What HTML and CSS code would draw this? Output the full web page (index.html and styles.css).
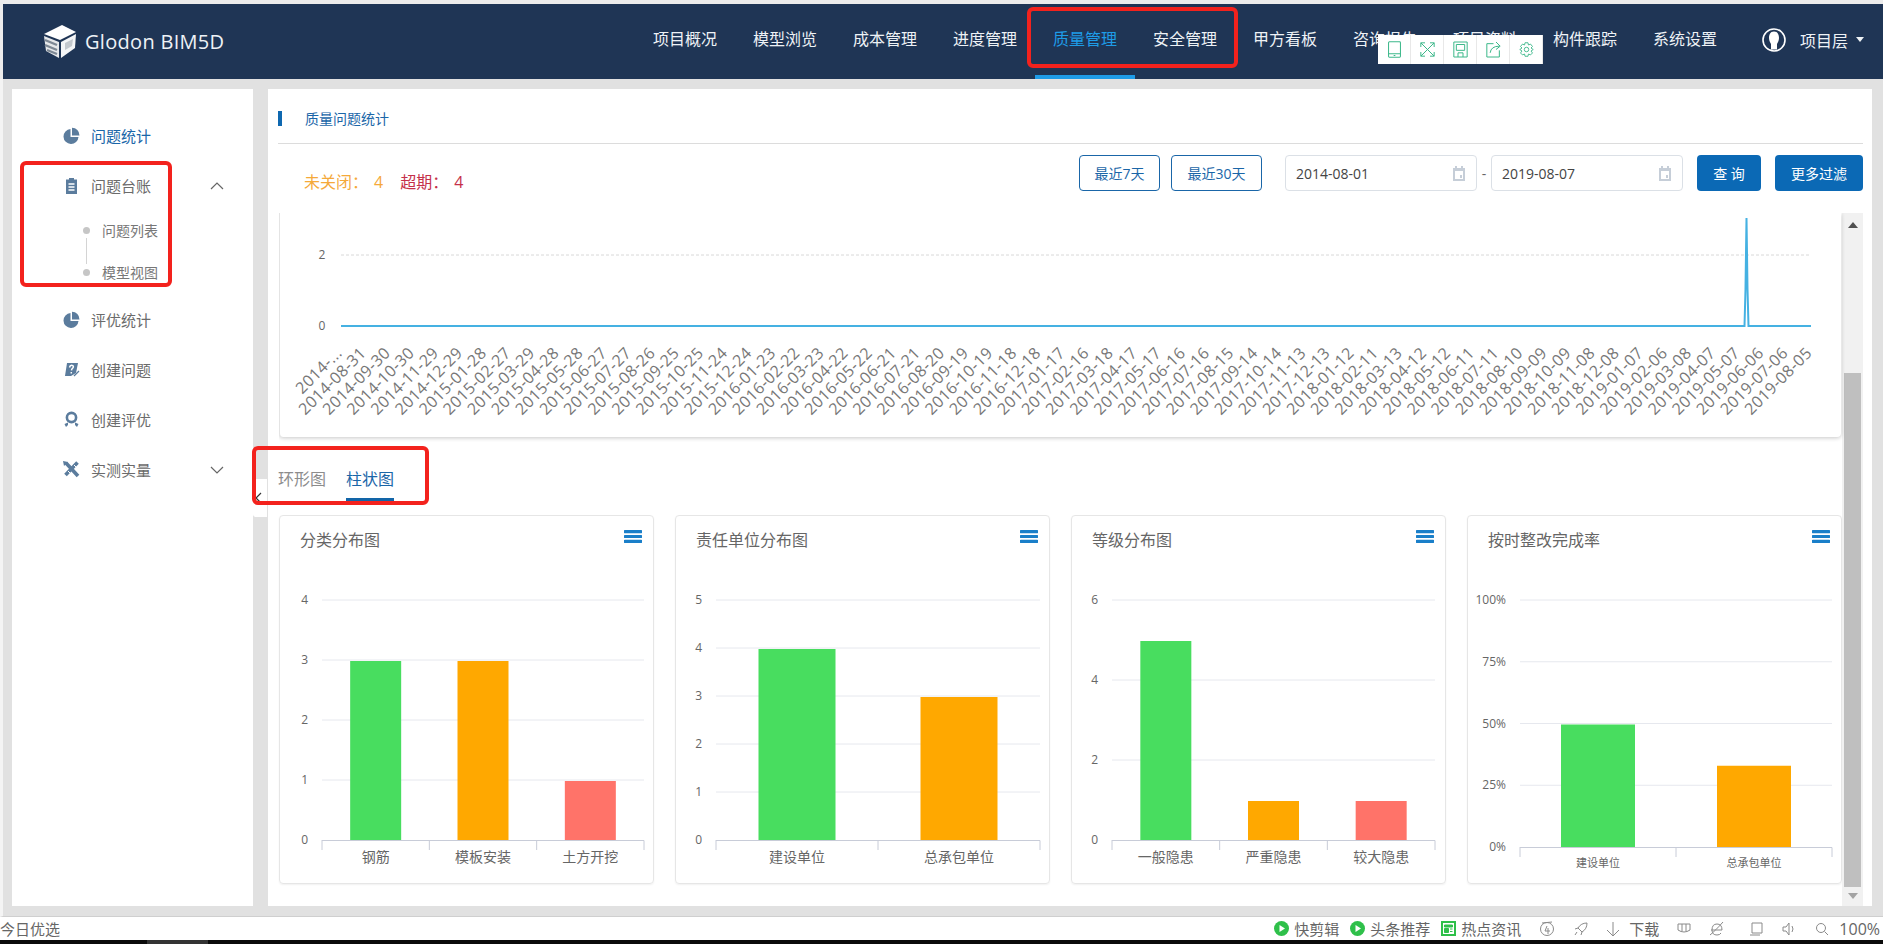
FILE: index.html
```html
<!DOCTYPE html>
<html lang="zh-CN">
<head>
    <meta charset="UTF-8">
    <title>Glodon BIM5D</title>
    <link rel="stylesheet" href="styles.css">
</head>
<body>
    <header class="topbar">
        <div class="logo">
            <svg width="33" height="33" viewBox="0 0 33 33">
                <path d="M1 9 L19 0 L33 7 L17 15 Z" fill="#fff"/>
                <path d="M1 11 L16 17 L16 33 L3 26 Z" fill="#e6e8ea"/>
                <path d="M2 15 L14 20 M2 20 L14 25 M4 25 L14 29" stroke="#7d8894" stroke-width="2.4"/>
                <path d="M18 17 L33 9 L32 23 L18 33 Z" fill="#f4f5f6"/>
                <path d="M22 18 L30 14 L29 21 L22 25 Z" fill="#c3c8cd"/>
            </svg>
            <span class="logo-text">Glodon BIM5D</span>
        </div>
        <nav class="nav">
            <a class="nav-item">项目概况</a>
            <a class="nav-item">模型浏览</a>
            <a class="nav-item">成本管理</a>
            <a class="nav-item">进度管理</a>
            <a class="nav-item active">质量管理</a>
            <a class="nav-item">安全管理</a>
            <a class="nav-item">甲方看板</a>
            <a class="nav-item">咨询报告</a>
            <a class="nav-item">项目资料</a>
            <a class="nav-item">构件跟踪</a>
            <a class="nav-item">系统设置</a>
        </nav>
        <div class="user">
            <svg width="24" height="24" viewBox="0 0 24 24">
                <circle cx="12" cy="12" r="11" fill="#1f3555" stroke="#fff" stroke-width="1.6"/>
                <path d="M12 3.5 C16 3.5 17 7 17 10 C17 13 15.5 15 15 16 L15 21.5 L9 21.5 L9 16 C8.5 15 7 13 7 10 C7 7 8 3.5 12 3.5 Z" fill="#fff"/>
            </svg>
            <span>项目层</span>
            <i class="caret"></i>
        </div>
    </header>

    <div class="page">
        <aside class="sidebar">
            <div class="side-item active">
                <svg class="side-icon" viewBox="0 0 17 17"><path d="M7.5 2 A7.5 7.5 0 1 0 15.5 10 L7.5 10 Z"/><path d="M9 .8 A7.5 7.5 0 0 1 16.5 8.5 L9 8.5 Z"/></svg>
                <span>问题统计</span>
            </div>
            <div class="side-item">
                <svg class="side-icon" viewBox="0 0 17 17"><path d="M3 2.5 H6 V1 H11 V2.5 H14 V17 H3 Z"/><path d="M5.5 7 H11.5 M5.5 10 H11.5 M5.5 13 H11.5" stroke="#fff" stroke-width="1.4"/></svg>
                <span>问题台账</span>
                <svg class="chevron" viewBox="0 0 14 8"><path d="M1 7 L7 1 L13 7"/></svg>
            </div>
            <ul class="sub-list">
                <li class="sub-item">问题列表</li>
                <li class="sub-item">模型视图</li>
            </ul>
            <div class="side-item">
                <svg class="side-icon" viewBox="0 0 17 17"><path d="M7.5 2 A7.5 7.5 0 1 0 15.5 10 L7.5 10 Z"/><path d="M9 .8 A7.5 7.5 0 0 1 16.5 8.5 L9 8.5 Z"/></svg>
                <span>评优统计</span>
            </div>
            <div class="side-item">
                <svg class="side-icon" viewBox="0 0 17 17"><path d="M4 2 H15 L13 12 L8 15 H2 Z"/><path d="M6.5 6.5 Q7 4 9.2 4.4 Q11.2 5 9.8 7 Q8.6 8 8.5 9.4 M8.3 11 V12.4" stroke="#fff" stroke-width="1.5" fill="none"/><path d="M11 15 L16 10" stroke="#5b7c9d" stroke-width="1.3"/></svg>
                <span>创建问题</span>
            </div>
            <div class="side-item">
                <svg class="side-icon" viewBox="0 0 17 17"><circle cx="8.5" cy="6.5" r="4.6" fill="none" stroke="#5b7c9d" stroke-width="2.6"/><path d="M1.5 13 L5 11.5 L5 14 L3 16 Z M15.5 13 L12 11.5 L12 14 L14 16 Z"/></svg>
                <span>创建评优</span>
            </div>
            <div class="side-item">
                <svg class="side-icon" viewBox="0 0 17 17"><path d="M3 2 L15 15 M14.5 1.5 L2.5 14" stroke="#5b7c9d" stroke-width="3.6"/><path d="M0 0 L5 1 L1 5 Z M5.5 7 L7 5.5 M9.5 11.5 L11 10" stroke="#fff" stroke-width="0"/><path d="M11 4 L13 6 M5 10 L7 12" stroke="#fff" stroke-width="1"/></svg>
                <span>实测实量</span>
                <svg class="chevron" viewBox="0 0 14 8"><path d="M1 1 L7 7 L13 1"/></svg>
            </div>
        </aside>

        <main class="content">
            <div class="section-title"><span>质量问题统计</span></div>
            <div class="filter-row">
                <div class="counts">
                    <span class="open">未关闭：<b>4</b></span>
                    <span class="late">超期：<b>4</b></span>
                </div>
                <div class="filters">
                    <button class="btn-line">最近7天</button>
                    <button class="btn-line">最近30天</button>
                    <div class="date-range">
                        <div class="date-input">2014-08-01
                            <svg width="14" height="15" viewBox="0 0 14 15"><path d="M1 2 H13 V15 H1 Z M3 5 V13 H11 V5 Z M8 9 H10 V12 H8 Z M3 0 H5 V2 H3 Z M9 0 H11 V2 H9 Z" fill="#c6ced8" fill-rule="evenodd"/></svg>
                        </div>
                        <span class="dash">-</span>
                        <div class="date-input">2019-08-07
                            <svg width="14" height="15" viewBox="0 0 14 15"><path d="M1 2 H13 V15 H1 Z M3 5 V13 H11 V5 Z M8 9 H10 V12 H8 Z M3 0 H5 V2 H3 Z M9 0 H11 V2 H9 Z" fill="#c6ced8" fill-rule="evenodd"/></svg>
                        </div>
                    </div>
                    <button class="btn-fill btn-query">查 询</button>
                    <button class="btn-fill">更多过滤</button>
                </div>
            </div>

            <div class="scroll-area">
                <div class="scroll-content">
                    <div class="line-panel">
                        <svg id="lineChart" width="1562" height="224"></svg>
                    </div>
                    <div class="tabs">
                        <span class="tab">环形图</span>
                        <span class="tab active">柱状图</span>
                    </div>
                    <div class="cards">
                        <section class="card">
                            <div class="card-head"><h3>分类分布图</h3><svg class="menu-icon" viewBox="0 0 18 13"><path d="M1 1.7 H17 M1 6.5 H17 M1 11.3 H17"/></svg></div>
                            <svg class="bars" data-chart="type" width="372" height="309"></svg>
                        </section>
                        <section class="card">
                            <div class="card-head"><h3>责任单位分布图</h3><svg class="menu-icon" viewBox="0 0 18 13"><path d="M1 1.7 H17 M1 6.5 H17 M1 11.3 H17"/></svg></div>
                            <svg class="bars" data-chart="unit" width="372" height="309"></svg>
                        </section>
                        <section class="card">
                            <div class="card-head"><h3>等级分布图</h3><svg class="menu-icon" viewBox="0 0 18 13"><path d="M1 1.7 H17 M1 6.5 H17 M1 11.3 H17"/></svg></div>
                            <svg class="bars" data-chart="level" width="372" height="309"></svg>
                        </section>
                        <section class="card">
                            <div class="card-head"><h3>按时整改完成率</h3><svg class="menu-icon" viewBox="0 0 18 13"><path d="M1 1.7 H17 M1 6.5 H17 M1 11.3 H17"/></svg></div>
                            <svg class="bars" data-chart="rate" width="372" height="309"></svg>
                        </section>
                    </div>
                </div>
                <div class="scrollbar">
                    <i class="arrow-up"></i>
                    <div class="thumb"></div>
                    <i class="arrow-down"></i>
                </div>
            </div>
        </main>
    </div>

    <footer class="statusbar">
        <span>今日优选</span>
        <div class="status-right">
            <span class="status-item"><svg width="15" height="15" viewBox="0 0 15 15"><circle cx="7.5" cy="7.5" r="7.5" fill="#2fc04a"/><path d="M5.5 4 L11 7.5 L5.5 11 Z" fill="#fff"/></svg>快剪辑</span>
            <span class="status-item"><svg width="15" height="15" viewBox="0 0 15 15"><circle cx="7.5" cy="7.5" r="7.5" fill="#2fc04a"/><path d="M5.5 4 L11 7.5 L5.5 11 Z" fill="#fff"/></svg>头条推荐</span>
            <span class="status-item"><svg width="15" height="15" viewBox="0 0 15 15"><path d="M0 0 H15 V15 H0 Z" fill="#2fc04a"/><path d="M2 2 H13 V13 H2 Z" fill="#fff"/><path d="M3.5 4 H11.5 V6 H3.5 Z M3.5 7.5 H7.5 V11.5 H3.5 Z M9 8 H11.5 M9 10.5 H11.5" fill="#2fc04a" stroke="#2fc04a"/></svg>热点资讯</span>
            <svg class="tray" width="16" height="16" viewBox="0 0 16 16"><circle cx="8" cy="8" r="6.5"/><path d="M3 2 L13 1 M8 5 L6 10 H11 M9 7 V13"/></svg>
            <svg class="tray" width="16" height="16" viewBox="0 0 16 16"><path d="M14 2 Q8 2 5 7 L9 11 Q14 8 14 2 Z M5 7 L2 8 M9 11 L8 14 M4 11 L2 14"/></svg>
            <span class="status-item tray-down"><svg class="tray" width="14" height="16" viewBox="0 0 14 16"><path d="M7 1 V15 M1 9 L7 15 L13 9"/></svg>下载</span>
            <svg class="tray" width="14" height="14" viewBox="0 0 14 14"><path d="M1 2 H13 V8 Q7 12 1 8 Z M5 2 V9 M9 2 V9"/></svg>
            <svg class="tray" width="16" height="16" viewBox="0 0 16 16"><path d="M2 9 H13 Q13 3 8 3 Q3 3 3 9 Q3 14 8 14 Q11 14 12 12 M1 14 Q6 10 14 1"/></svg>
            <svg class="tray tray-box" width="14" height="14" viewBox="0 0 14 14"><path d="M3 1 H13 V11 H3 Z M1 13 H11"/></svg>
            <svg class="tray" width="16" height="16" viewBox="0 0 16 16"><path d="M2 6 H5 L8 2 V14 L5 10 H2 Z M11 5 Q13 8 11 11"/></svg>
            <svg class="tray" width="14" height="14" viewBox="0 0 14 14"><circle cx="6" cy="6" r="4.5"/><path d="M9.5 9.5 L13 13"/></svg>
            <span class="zoom">100%</span>
        </div>
    </footer>
    <div class="taskbar"><i></i></div>

    <div class="toolbar">
        <span><svg viewBox="0 0 16 20"><rect x="1" y="1" width="14" height="18" rx="1"/><path d="M1 15 H15 M7 17 H9"/></svg></span>
        <span><svg viewBox="0 0 18 18"><path d="M1 1 L17 17 M17 1 L1 17 M1 6 V1 H6 M12 1 H17 V6 M17 12 V17 H12 M6 17 H1 V12"/></svg></span>
        <span><svg viewBox="0 0 18 20"><path d="M1 1 H17 V19 H1 Z M4 4 H14 V11 H4 Z M6 19 V14 H12 V19"/></svg></span>
        <span><svg viewBox="0 0 18 20"><path d="M9 3 H1 V19 H16 V11 M5 14 Q6 6 16 6 M12 1 L17 6 L12 10"/></svg></span>
        <span><svg viewBox="0 0 20 20"><path d="M8 1 H12 L12.6 4 L15.4 2.8 L18 6 L16 8 L19 10 L16 12 L18 14.6 L15.4 17.2 L12.6 16 L12 19 H8 L7.4 16 L4.6 17.2 L2 14.6 L4 12 L1 10 L4 8 L2 6 L4.6 2.8 L7.4 4 Z"/><circle cx="10" cy="10" r="3"/></svg></span>
    </div>
    <div class="collapse-handle"><svg width="7" height="12" viewBox="0 0 7 12"><path d="M6 1 L1 6 L6 11" fill="none" stroke="#333" stroke-width="1.2"/></svg></div>
    <div class="mark mark-nav"></div>
    <div class="mark mark-side"></div>
    <div class="mark mark-tabs"></div>

    <script src="charts.js"></script>
</body>
</html>
```
FILE: styles.css
```css
* {
    box-sizing: border-box;
}

body {
    margin: 0;
    height: 944px;
    overflow: hidden;
    display: flex;
    flex-direction: column;
    padding-top: 4px;
    background-color: #ececec;
    font-family: "Open Sans", "Noto Sans CJK SC", sans-serif;
    font-size: 14px;
    color: #666;
}

/* top bar */
.topbar {
    height: 75px;
    margin-left: 3px;
    display: flex;
    background-color: #1f3555;
    color: #eef2f6;
    flex-shrink: 0;
}

.logo {
    display: flex;
    align-items: center;
    gap: 9px;
    margin-left: 40px;
}

.logo-text {
    font-size: 20px;
    letter-spacing: 0.3px;
}

.nav {
    display: flex;
    margin-left: auto;
}

.nav-item {
    width: 100px;
    text-align: center;
    font-size: 16px;
    line-height: 70px;
    height: 75px;
}

.nav-item.active {
    color: #1e9ce8;
    border-bottom: 4px solid #1e9ce8;
}

.user {
    display: flex;
    align-items: center;
    height: 71px;
    margin-left: 27px;
    padding-right: 19px;
    font-size: 16px;
}

.user span {
    margin-left: 14px;
}

.caret {
    margin-left: 8px;
    border-left: 4px solid transparent;
    border-right: 4px solid transparent;
    border-top: 5px solid #eef2f6;
}

/* page body */
.page {
    flex: 1;
    display: flex;
    gap: 15px;
    min-height: 0;
    padding: 10px 11px 10px 9px;
    background-color: #e1e1e1;
    border-left: 3px solid #f4f4f4;
    border-bottom: 1px solid #cfcfcf;
}

.sidebar {
    width: 241px;
    flex-shrink: 0;
    padding-top: 21px;
    background-color: white;
}

.side-item {
    height: 50px;
    display: flex;
    align-items: center;
    padding: 0 29px 0 51px;
    font-size: 15px;
    color: #6b6b6b;
}

.side-item.active {
    color: #1a66a8;
}

.side-icon {
    width: 17px;
    height: 17px;
    margin-right: 11px;
    fill: #5b7c9d;
}

.chevron {
    width: 14px;
    height: 8px;
    margin-left: auto;
    margin-top: 2px;
    fill: none;
    stroke: #666;
    stroke-width: 1.2;
}

.sub-list {
    list-style: none;
    margin: -1px 0 1px;
    padding: 0;
}

.sub-item {
    position: relative;
    height: 42px;
    display: flex;
    align-items: center;
    padding-left: 71px;
    color: #777;
}

.sub-item::before {
    content: "";
    width: 7px;
    height: 7px;
    margin-right: 12px;
    border-radius: 50%;
    background-color: #c6c6c6;
}

.sub-item:first-child::after {
    content: "";
    position: absolute;
    left: 74px;
    top: 29px;
    height: 26px;
    border-left: 1px solid #d4d4d4;
}

.content {
    flex: 1;
    min-width: 0;
    display: flex;
    flex-direction: column;
    padding: 0 9px 0 10px;
    background-color: white;
}

.section-title {
    height: 55px;
    padding-top: 22px;
    border-bottom: 1px solid #dcdcdc;
    flex-shrink: 0;
}

.section-title span {
    display: block;
    height: 15px;
    line-height: 15px;
    padding-left: 23px;
    border-left: 4px solid #0f68b0;
    color: #1a66a8;
    font-size: 14px;
}

.filter-row {
    height: 69px;
    display: flex;
    justify-content: space-between;
    flex-shrink: 0;
}

.counts {
    display: flex;
    margin: 26px 0 0 26px;
    font-size: 16px;
    line-height: 24px;
}

.counts b {
    font-weight: 400;
    margin-left: 6px;
}

.open {
    color: #f5a93a;
}

.late {
    margin-left: 17px;
    color: #c5304a;
}

.filters {
    display: flex;
    align-items: flex-start;
    padding-top: 11px;
}

button {
    height: 36px;
    padding: 0;
    border-radius: 4px;
    font-family: inherit;
    font-size: 14px;
}

.btn-line {
    width: 81px;
    margin-right: 11px;
    border: 1px solid #1a66a8;
    background-color: white;
    color: #1a66a8;
}

.btn-line + .btn-line {
    width: 91px;
    margin-right: 23px;
}

.btn-fill {
    width: 88px;
    border: none;
    background-color: #0b69b5;
    color: white;
}

.btn-query {
    width: 64px;
    margin-right: 14px;
}

.date-range {
    display: flex;
    align-items: center;
    margin-right: 14px;
}

.date-input {
    width: 192px;
    height: 36px;
    display: flex;
    align-items: center;
    justify-content: space-between;
    padding: 0 10px;
    border: 1px solid #dbe0e6;
    border-radius: 4px;
    color: #444;
}

.dash {
    width: 14px;
    text-align: center;
}

/* scrolling part */
.scroll-area {
    flex: 1;
    min-height: 0;
    display: flex;
    margin-left: 1px;
}

.scroll-content {
    width: 1562px;
}

.line-panel {
    height: 224px;
    background-color: white;
    border-left: 1px solid #e4e4e4;
    border-radius: 0 0 4px 4px;
    box-shadow: 0 1px 4px rgba(0, 0, 0, 0.22);
    clip-path: inset(0 -6px -6px 0);
}

.line-panel svg {
    display: block;
    margin-left: -1px;
}

.tabs {
    display: flex;
    gap: 20px;
    margin: 30px 0 14px -1px;
}

.tab {
    font-size: 16px;
    line-height: 24px;
    padding-bottom: 7px;
    border-bottom: 3px solid transparent;
    color: #8c8c8c;
}

.tab.active {
    color: #1a66a8;
    border-bottom-color: #1265a8;
}

.cards {
    display: grid;
    grid-template-columns: repeat(4, 375px);
    gap: 21px;
}

.card {
    height: 369px;
    border: 1px solid #e6e6e6;
    border-radius: 4px;
    box-shadow: 0 1px 2px rgba(0, 0, 0, 0.06);
}

.card-head {
    height: 59px;
    display: flex;
    justify-content: space-between;
    padding: 14px 11px 0 20px;
}

.card-head h3 {
    margin: 0;
    font-size: 16px;
    font-weight: 400;
    line-height: 20px;
    color: #666;
}

.menu-icon {
    width: 18px;
    height: 13px;
    fill: none;
    stroke: #1a7fc9;
    stroke-width: 3.2;
    stroke-linecap: round;
}

.bars {
    display: block;
}

.grid-line {
    stroke: #e6e8ee;
    stroke-width: 1;
}

.axis-line {
    stroke: #c8ccd8;
    stroke-width: 1;
    fill: none;
}

.y-label {
    font-size: 12px;
    fill: #666;
}

.x-label {
    font-size: 14px;
    fill: #666;
}

.x-label-small {
    font-size: 11px;
}

.date-label {
    font-size: 16px;
    letter-spacing: 0.4px;
    fill: #777;
}

.zero-line {
    fill: none;
    stroke: #45b1e2;
    stroke-width: 2;
}

.dash-line {
    stroke: #d8d8d8;
    stroke-width: 1;
    stroke-dasharray: 3 2;
}

.scrollbar {
    width: 21px;
    margin-left: 1px;
    padding-top: 9px;
    display: flex;
    flex-direction: column;
    align-items: center;
    background-color: #f1f1f1;
}

.thumb {
    width: 17px;
    height: 514px;
    margin: 145px 0 6px;
    background-color: #bfbfbf;
}

.arrow-up {
    border-left: 5px solid transparent;
    border-right: 5px solid transparent;
    border-bottom: 6px solid #505050;
}

.arrow-down {
    border-left: 5px solid transparent;
    border-right: 5px solid transparent;
    border-top: 6px solid #a3a3a3;
}

/* bottom browser bar */
.statusbar {
    height: 23px;
    flex-shrink: 0;
    display: flex;
    justify-content: space-between;
    align-items: center;
    background-color: white;
    color: #666;
    font-size: 15px;
}

.status-right {
    display: flex;
    align-items: center;
    padding-right: 3px;
}

.status-item {
    display: flex;
    align-items: center;
    gap: 5px;
    margin-left: 11px;
}

.tray {
    fill: none;
    stroke: #8a8a8a;
    stroke-width: 1;
    margin-left: 18px;
}

.status-item.tray-down {
    margin-left: 17px;
}

.tray-down .tray {
    margin: 0 4px 0 0;
}

.tray-box {
    margin-left: 24px;
}

.zoom {
    margin-left: 10px;
    font-size: 16px;
}

.taskbar {
    height: 4px;
    flex-shrink: 0;
    background-color: #0a0a0a;
}

.taskbar i {
    display: block;
    width: 61px;
    height: 4px;
    margin-left: 147px;
    background-color: #333;
}

/* things lying over the page */
.toolbar {
    position: absolute;
    left: 1378px;
    top: 35px;
    display: flex;
    height: 29px;
    background-color: white;
}

.toolbar span {
    width: 33px;
    display: flex;
    align-items: center;
    justify-content: center;
    border-right: 1px solid #e8e8e8;
}

.toolbar svg {
    width: 15px;
    height: 17px;
    fill: none;
    stroke: #3cb88a;
    stroke-width: 1.2;
}

.collapse-handle {
    position: absolute;
    left: 253px;
    top: 479px;
    width: 14px;
    height: 38px;
    display: flex;
    align-items: center;
    padding-left: 2px;
    background-color: white;
    border-radius: 3px 0 0 3px;
}

.mark {
    position: absolute;
    border: 4px solid #f3221d;
    border-radius: 6px;
}

.mark-nav {
    left: 1027px;
    top: 7px;
    width: 211px;
    height: 61px;
}

.mark-side {
    left: 20px;
    top: 161px;
    width: 152px;
    height: 126px;
}

.mark-tabs {
    left: 252px;
    top: 446px;
    width: 177px;
    height: 59px;
}
```
FILE: charts.js
```js
const SVG_NS = "http://www.w3.org/2000/svg";

function add(svg, tag, attrs, text) {
    const el = document.createElementNS(SVG_NS, tag);
    for (const key in attrs) {
        el.setAttribute(key, attrs[key]);
    }
    if (text !== undefined) {
        el.textContent = text;
    }
    svg.appendChild(el);
    return el;
}

function drawLineChart(svg) {
    const left = 62;
    const right = 1532;
    const zeroY = 113;
    const step = (right - left) / 61;

    add(svg, "line", { class: "dash-line", x1: left, x2: right, y1: 42, y2: 42 });
    add(svg, "text", { class: "y-label", x: 43, y: 46, "text-anchor": "middle" }, "2");
    add(svg, "text", { class: "y-label", x: 43, y: 117, "text-anchor": "middle" }, "0");
    add(svg, "path", {
        class: "zero-line",
        d: `M${left} ${zeroY} H1465.5 L1466.5 76 L1467.5 5 L1468.5 76 L1469.5 ${zeroY} H${right}`,
    });

    // one tick every 30 days
    const start = Date.UTC(2014, 7, 1);
    for (let i = 0; i <= 61; i++) {
        const date = new Date(start + i * 30 * 86400000).toISOString().slice(0, 10);
        const x = left + i * step + 2;
        const y = 141;
        add(svg, "text", {
            class: "date-label",
            x: x,
            y: y,
            "text-anchor": "end",
            transform: `rotate(-45 ${x} ${y})`,
        }, i === 0 ? "2014-..." : date);
    }
}

const barCharts = {
    type: {
        left: 42, right: 364, bottom: 265, ticks: [0, 1, 2, 3, 4], unit: 60,
        items: [["钢筋", 3, "#48dd5f"], ["模板安装", 3, "#ffa800"], ["土方开挖", 1, "#ff7369"]],
    },
    unit: {
        left: 40, right: 364, bottom: 265, ticks: [0, 1, 2, 3, 4, 5], unit: 48,
        items: [["建设单位", 4, "#48dd5f"], ["总承包单位", 3, "#ffa800"]],
    },
    level: {
        left: 40, right: 363, bottom: 265, ticks: [0, 2, 4, 6], unit: 40,
        items: [["一般隐患", 5, "#48dd5f"], ["严重隐患", 1, "#ffa800"], ["较大隐患", 1, "#ff7369"]],
    },
    rate: {
        left: 52, right: 364, bottom: 272, ticks: [0, 25, 50, 75, 100], unit: 2.47, suffix: "%", small: true,
        items: [["建设单位", 50, "#48dd5f"], ["总承包单位", 33.3, "#ffa800"]],
    },
};

function drawBarChart(svg, chart) {
    const band = (chart.right - chart.left) / chart.items.length;
    const barWidth = Math.round(band * 0.475);
    const suffix = chart.suffix || "";

    chart.ticks.forEach((tick) => {
        const y = chart.bottom - tick * chart.unit;
        if (tick > 0) {
            add(svg, "line", { class: "grid-line", x1: chart.left, x2: chart.right, y1: y, y2: y });
        }
        add(svg, "text", { class: "y-label", x: chart.left - 14, y: y + 4, "text-anchor": "end" }, tick + suffix);
    });

    chart.items.forEach((item, i) => {
        const center = chart.left + band * (i + 0.5);
        const height = item[1] * chart.unit - 1;
        add(svg, "rect", {
            x: center - barWidth / 2,
            y: chart.bottom - height,
            width: barWidth,
            height: height,
            fill: item[2],
        });
        add(svg, "text", {
            class: chart.small ? "x-label x-label-small" : "x-label",
            x: center,
            y: chart.small ? chart.bottom + 20 : chart.bottom + 22,
            "text-anchor": "middle",
        }, item[0]);
        add(svg, "line", {
            class: "axis-line",
            x1: chart.left + band * i,
            x2: chart.left + band * i,
            y1: chart.bottom,
            y2: chart.bottom + 10,
        });
    });

    add(svg, "path", {
        class: "axis-line",
        d: `M${chart.left} ${chart.bottom + 0.5} H${chart.right} V${chart.bottom + 10}`,
    });
}

drawLineChart(document.getElementById("lineChart"));
document.querySelectorAll(".bars").forEach((svg) => {
    drawBarChart(svg, barCharts[svg.dataset.chart]);
});
```
